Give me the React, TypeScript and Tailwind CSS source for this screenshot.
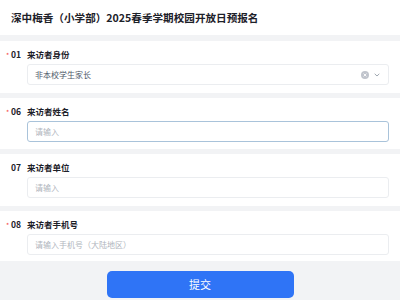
import React from 'react';

const font = "font-['Noto_Sans_CJK_SC','Noto_Sans',sans-serif]";

type FieldProps = {
  no: string;
  label: string;
  required?: boolean;
  height: string;
  children: React.ReactNode;
};

const Field: React.FC<FieldProps> = ({ no, label, required, height, children }) => (
  <div className={`bg-white ${height} pt-[6px]`}>
    <div className="flex items-center h-[14px] text-[8.5px] font-bold text-[#1d2129]">
      <span className="w-[11px] pl-[6px] pt-[3px] text-[#f53f3f] font-normal text-[7px] leading-none">{required ? '*' : ''}</span>
      <span className="w-[16px]">{no}</span>
      <span>{label}</span>
    </div>
    {children}
  </div>
);

const App: React.FC = () => {
  return (
    <div className={`w-[400px] h-[300px] overflow-hidden bg-[#f2f3f5] ${font}`}>
      {/* Title */}
      <div className="bg-white h-[35px] px-[11px] flex items-center text-[10.6px] font-bold text-[#1d2129]">
        深中梅香（小学部）2025春季学期校园开放日预报名
      </div>

      <div className="flex flex-col mt-[6px] gap-[5px]">
        {/* 01 */}
        <Field no="01" label="来访者身份" required height="h-[52px]">
          <div className="mt-[3px] ml-[27px] mr-[11px] h-[21px] border border-[#ebedf0] rounded-[3px] pl-[7px] pr-[8px] flex items-center text-[8px] text-[#4e5969]">
            <span className="flex-1">非本校学生家长</span>
            <span className="w-[8px] h-[8px] rounded-full bg-[#c0c4cc] flex items-center justify-center">
              <svg width="4" height="4" viewBox="0 0 4 4">
                <path d="M0.6 0.6 L3.4 3.4 M3.4 0.6 L0.6 3.4" stroke="#fff" strokeWidth="0.9" />
              </svg>
            </span>
            <svg className="ml-[5px]" width="6" height="4" viewBox="0 0 6 4">
              <path d="M0.7 0.8 L3 3 L5.3 0.8" stroke="#86909c" strokeWidth="0.8" fill="none" />
            </svg>
          </div>
        </Field>

        {/* 06 */}
        <Field no="06" label="来访者姓名" required height="h-[51px]">
          <div className="mt-[3px] ml-[27px] mr-[11px] h-[21px] border border-[#a9c3da] rounded-[3px] px-[7px] flex items-center text-[8px] text-[#b0b5bd]">
            请输入
          </div>
        </Field>

        {/* 07 */}
        <Field no="07" label="来访者单位" height="h-[52px]">
          <div className="mt-[3px] ml-[27px] mr-[11px] h-[21px] border border-[#ebedf0] rounded-[3px] px-[7px] flex items-center text-[8px] text-[#b0b5bd]">
            请输入
          </div>
        </Field>

        {/* 08 */}
        <Field no="08" label="来访者手机号" required height="h-[50px]">
          <div className="mt-[3px] ml-[27px] mr-[11px] h-[21px] border border-[#ebedf0] rounded-[3px] px-[7px] flex items-center text-[8px] text-[#b0b5bd]">
            请输入手机号（大陆地区）
          </div>
        </Field>
      </div>

      {/* Submit */}
      <div className="flex justify-center pt-[10px]">
        <button className="w-[187px] h-[27px] rounded-[5px] bg-[#2f74f6] text-white text-[11px]">
          提交
        </button>
      </div>
    </div>
  );
};

export default App;
